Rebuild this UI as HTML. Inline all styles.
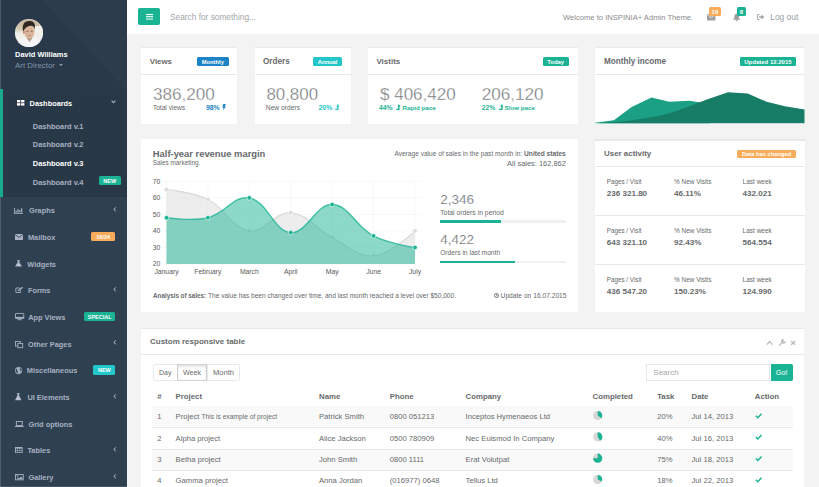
<!DOCTYPE html><html><head><meta charset="utf-8"><style>
html,body{margin:0;padding:0;}
body{width:819px;height:487px;position:relative;overflow:hidden;background:#f3f3f4;font-family:"Liberation Sans", sans-serif;}
.t{position:absolute;white-space:nowrap;line-height:1;}
.r{position:absolute;}
svg{position:absolute;overflow:visible;}
</style></head><body>
<div class="r" style="left:0.00px;top:0.00px;width:127.00px;height:487.00px;background:#2f4050;"></div>
<div class="r" style="left:0.00px;top:0.00px;width:127.00px;height:89.40px;background:#29394a;"></div>
<svg style="left:0.00px;top:0.00px" width="127" height="90" viewBox="0 0 127 90"><polygon points="43.3,0 127,0 127,89.4 124.6,89.4" fill="#2c3c4c"/></svg>
<svg style="left:15.00px;top:19.00px" width="28" height="28" viewBox="0 0 28 28"><defs><clipPath id="av"><circle cx="14" cy="14" r="14"/></clipPath><linearGradient id="bgg" x1="0" y1="0" x2="0" y2="1"><stop offset="0" stop-color="#bfae90"/><stop offset="0.38" stop-color="#d8ccb6"/><stop offset="0.5" stop-color="#eeede9"/><stop offset="1" stop-color="#f4f4f4"/></linearGradient></defs><g clip-path="url(#av)"><rect width="28" height="28" fill="url(#bgg)"/><rect x="20" y="7" width="8" height="9" fill="#f1efe9"/><path d="M0 28 C1 22 6 19 14 19 C22 19 27 22 28 28Z" fill="#f6f6f6"/><path d="M11.5 19 L14.5 23 L17.5 19Z" fill="#b39c8c"/><rect x="12" y="15.5" width="5" height="4" fill="#c89d82"/><ellipse cx="14.3" cy="13" rx="5" ry="6.6" fill="#dcb49b"/><ellipse cx="8.9" cy="13.2" rx="1.2" ry="1.9" fill="#cf9f86"/><path d="M11.4 12.2 h2 M15.6 12.2 h2" stroke="#6b5040" stroke-width="0.8"/><path d="M12.6 16.6 h3.4" stroke="#b07a66" stroke-width="0.6"/><path d="M8.2 12.5 C6.5 6 9.5 2 14 2 C18.5 2 20.8 4.5 19.8 10 C19.2 7.6 17.6 6.6 15.6 6.8 C12.6 7 10 8.6 8.2 12.5Z" fill="#2e2723"/></g><circle cx="14" cy="14" r="13.7" fill="none" stroke="#f0f0f0" stroke-width="0.6" opacity="0.7"/></svg>
<div class="t" style="left:15.10px;top:51px;font-size:7.46px;color:#fff;font-weight:bold;">David Williams</div>
<div class="t" style="left:15.10px;top:62px;font-size:7.9px;color:#8095a8;font-weight:normal;">Art Director</div>
<svg style="left:58.50px;top:64.20px" width="4" height="3" viewBox="0 0 4 3"><polygon points="0,0 4,0 2,2.2" fill="#8095a8"/></svg>
<div class="r" style="left:0.00px;top:89.40px;width:127.00px;height:107.20px;background:#293846;"></div>
<div class="r" style="left:0.00px;top:89.40px;width:2.50px;height:107.20px;background:#19aa8d;"></div>
<svg style="left:16.80px;top:100.20px" width="7.4" height="5.6" viewBox="0 0 7.4 5.6"><rect x="0" y="0" width="3.3" height="2.4" fill="#fff"/><rect x="4.1" y="0" width="3.3" height="2.4" fill="#fff"/><rect x="0" y="3.2" width="3.3" height="2.4" fill="#fff"/><rect x="4.1" y="3.2" width="3.3" height="2.4" fill="#fff"/></svg>
<div class="t" style="left:29.60px;top:100px;font-size:7.39px;color:#fff;font-weight:bold;">Dashboards</div>
<svg style="left:110.50px;top:100.30px" width="5" height="3.5" viewBox="0 0 5 3.5"><polyline points="0.6,0.6 2.5,2.6 4.4,0.6" fill="none" stroke="#a7b1c2" stroke-width="1.1"/></svg>
<div class="t" style="left:32.80px;top:123px;font-size:7.45px;color:#a7b1c2;font-weight:bold;">Dashboard v.1</div>
<div class="t" style="left:32.80px;top:141px;font-size:7.45px;color:#a7b1c2;font-weight:bold;">Dashboard v.2</div>
<div class="t" style="left:32.80px;top:160px;font-size:7.45px;color:#fff;font-weight:bold;">Dashboard v.3</div>
<div class="t" style="left:32.80px;top:179px;font-size:7.45px;color:#a7b1c2;font-weight:bold;">Dashboard v.4</div>
<div class="r" style="left:98.60px;top:176.20px;width:22.20px;height:8.80px;background:#1ab394;border-radius:1.5px;"></div>
<div class="t" style="left:109.70px;transform:translateX(-50%);top:179px;font-size:5.5px;color:#fff;font-weight:bold;">NEW</div>
<div class="t" style="left:28.90px;top:207px;font-size:7.4px;color:#a7b1c2;font-weight:bold;">Graphs</div>
<svg style="left:14.30px;top:207.60px" width="9.2" height="5.8" viewBox="0 0 9.2 5.8"><rect x="0" y="0" width="0.9" height="5.8" fill="#a7b1c2"/><rect x="0" y="4.9" width="9.2" height="0.9" fill="#a7b1c2"/><rect x="1.6" y="2.6" width="1.2" height="1.9" fill="#a7b1c2"/><rect x="3.4" y="1.0" width="1.2" height="3.5" fill="#a7b1c2"/><rect x="5.2" y="2.0" width="1.2" height="2.5" fill="#a7b1c2"/><rect x="7.0" y="0.2" width="1.2" height="4.3" fill="#a7b1c2"/></svg>
<svg style="left:112.60px;top:206.50px" width="3.5" height="5" viewBox="0 0 3.5 5"><polyline points="2.8,0.5 0.9,2.4 2.8,4.3" fill="none" stroke="#c3cad5" stroke-width="1.0"/></svg>
<div class="t" style="left:27.90px;top:234px;font-size:7.4px;color:#a7b1c2;font-weight:bold;">Mailbox</div>
<svg style="left:14.60px;top:234.20px" width="8" height="6.1" viewBox="0 0 8 6.1"><rect x="0" y="0" width="8" height="6.1" rx="0.5" fill="#a7b1c2"/><polyline points="0.2,0.6 4,3.4 7.8,0.6" fill="none" stroke="#2f4050" stroke-width="0.8"/></svg>
<div class="r" style="left:90.80px;top:232.00px;width:24.70px;height:9.20px;background:#f8ac59;border-radius:1.5px;"></div>
<div class="t" style="left:103.15px;transform:translateX(-50%);top:235px;font-size:5.5px;color:#fff;font-weight:bold;">16/24</div>
<div class="t" style="left:27.30px;top:261px;font-size:7.4px;color:#a7b1c2;font-weight:bold;">Widgets</div>
<svg style="left:15.00px;top:260.00px" width="7" height="6.6" viewBox="0 0 7 6.6"><path d="M2.2 0 H4.8 V0.7 H4.4 V2.3 L7 6.6 H0 L2.6 2.3 V0.7 H2.2Z" fill="#a7b1c2"/><path d="M2.5 4.2 L4.5 4.2 L5.5 5.8 L1.5 5.8Z" fill="#c9d0db"/></svg>
<div class="t" style="left:27.90px;top:287px;font-size:7.4px;color:#a7b1c2;font-weight:bold;">Forms</div>
<svg style="left:14.60px;top:287.20px" width="8.2" height="6" viewBox="0 0 8.2 6"><path d="M5 1 H0.9 V5.5 H5.6 V3.6" fill="none" stroke="#a7b1c2" stroke-width="0.9"/><path d="M2.8 4.2 L3.1 3 L7 -0.3 L8 0.8 L4 4.3Z" fill="#a7b1c2"/></svg>
<svg style="left:112.60px;top:286.90px" width="3.5" height="5" viewBox="0 0 3.5 5"><polyline points="2.8,0.5 0.9,2.4 2.8,4.3" fill="none" stroke="#c3cad5" stroke-width="1.0"/></svg>
<div class="t" style="left:28.20px;top:314px;font-size:7.4px;color:#a7b1c2;font-weight:bold;">App Views</div>
<svg style="left:14.60px;top:313.30px" width="9.2" height="7.2" viewBox="0 0 9.2 7.2"><rect x="0.45" y="0.45" width="8.3" height="4.9" rx="0.4" fill="none" stroke="#a7b1c2" stroke-width="0.9"/><rect x="0" y="3.9" width="9.2" height="1.5" fill="#a7b1c2"/><rect x="3.7" y="5.4" width="1.8" height="1" fill="#a7b1c2"/><rect x="2.4" y="6.3" width="4.4" height="0.9" fill="#a7b1c2"/></svg>
<div class="r" style="left:83.90px;top:311.90px;width:31.60px;height:9.20px;background:#1ab394;border-radius:1.5px;"></div>
<div class="t" style="left:99.70px;transform:translateX(-50%);top:315px;font-size:5.5px;color:#fff;font-weight:bold;">SPECIAL</div>
<div class="t" style="left:28.00px;top:341px;font-size:7.4px;color:#a7b1c2;font-weight:bold;">Other Pages</div>
<svg style="left:15.00px;top:340.50px" width="8.2" height="7.1" viewBox="0 0 8.2 7.1"><rect x="0.45" y="0.45" width="4.8" height="4.6" fill="none" stroke="#a7b1c2" stroke-width="0.9"/><rect x="2.9" y="2.5" width="4.8" height="4.2" fill="#2f4050" stroke="#a7b1c2" stroke-width="0.9"/></svg>
<svg style="left:112.60px;top:340.40px" width="3.5" height="5" viewBox="0 0 3.5 5"><polyline points="2.8,0.5 0.9,2.4 2.8,4.3" fill="none" stroke="#c3cad5" stroke-width="1.0"/></svg>
<div class="t" style="left:26.80px;top:367px;font-size:7.4px;color:#a7b1c2;font-weight:bold;">Miscellaneous</div>
<svg style="left:14.60px;top:366.90px" width="7.2" height="7.2" viewBox="0 0 7.2 7.2"><circle cx="3.6" cy="3.6" r="3.6" fill="#a7b1c2"/><path d="M1.2 1.8 C2 2.2 2.5 3 2.2 4 C3 4.5 2.8 5.6 3.4 6.4 C2 6.2 0.8 5 0.5 3.6Z M4.2 1 C5.2 1.4 5.4 2.4 4.6 2.8 C5.6 3.2 6.2 4.4 5.6 5.4 C6.6 4.6 7 3 6.2 1.8Z" fill="#2f4050"/></svg>
<div class="r" style="left:93.20px;top:365.40px;width:22.30px;height:9.20px;background:#23c6c8;border-radius:1.5px;"></div>
<div class="t" style="left:104.35px;transform:translateX(-50%);top:368px;font-size:5.5px;color:#fff;font-weight:bold;">NEW</div>
<div class="t" style="left:27.40px;top:394px;font-size:7.4px;color:#a7b1c2;font-weight:bold;">UI Elements</div>
<svg style="left:15.00px;top:393.20px" width="6.5" height="7.2" viewBox="0 0 6.5 7.2"><path d="M1.9 0 H4.6 V0.8 H4.2 V2.6 L6.5 7.2 H0 L2.3 2.6 V0.8 H1.9Z" fill="#a7b1c2"/><path d="M2.1 4.6 L4.4 4.6 L5.4 6.4 L1.1 6.4Z" fill="#c9d0db"/></svg>
<svg style="left:112.60px;top:393.50px" width="3.5" height="5" viewBox="0 0 3.5 5"><polyline points="2.8,0.5 0.9,2.4 2.8,4.3" fill="none" stroke="#c3cad5" stroke-width="1.0"/></svg>
<div class="t" style="left:28.40px;top:421px;font-size:7.4px;color:#a7b1c2;font-weight:bold;">Grid options</div>
<svg style="left:14.70px;top:421.10px" width="8.7" height="6" viewBox="0 0 8.7 6"><rect x="1.35" y="0.45" width="6" height="4" fill="none" stroke="#a7b1c2" stroke-width="0.9"/><rect x="0" y="5" width="8.7" height="1" fill="#a7b1c2"/></svg>
<div class="t" style="left:27.40px;top:447px;font-size:7.4px;color:#a7b1c2;font-weight:bold;">Tables</div>
<svg style="left:14.70px;top:447.20px" width="7.6" height="6" viewBox="0 0 7.6 6"><rect x="0" y="0" width="7.6" height="6" fill="#a7b1c2"/><rect x="0.9" y="1.6" width="1.6" height="1.6" fill="#2f4050"/><rect x="3.0" y="1.6" width="1.6" height="1.6" fill="#2f4050"/><rect x="5.1" y="1.6" width="1.6" height="1.6" fill="#2f4050"/><rect x="0.9" y="3.7" width="1.6" height="1.6" fill="#2f4050"/><rect x="3.0" y="3.7" width="1.6" height="1.6" fill="#2f4050"/><rect x="5.1" y="3.7" width="1.6" height="1.6" fill="#2f4050"/></svg>
<svg style="left:112.60px;top:446.80px" width="3.5" height="5" viewBox="0 0 3.5 5"><polyline points="2.8,0.5 0.9,2.4 2.8,4.3" fill="none" stroke="#c3cad5" stroke-width="1.0"/></svg>
<div class="t" style="left:28.40px;top:474px;font-size:7.4px;color:#a7b1c2;font-weight:bold;">Gallery</div>
<svg style="left:14.70px;top:474.10px" width="8.7" height="6.3" viewBox="0 0 8.7 6.3"><rect x="0.45" y="0.45" width="7.8" height="5.4" fill="none" stroke="#a7b1c2" stroke-width="0.9"/><circle cx="2.4" cy="2.1" r="0.8" fill="#a7b1c2"/><path d="M1.2 5.2 L3.4 3.4 L4.4 4.2 L6 2.4 L7.5 4 L7.5 5.2Z" fill="#a7b1c2"/></svg>
<svg style="left:112.60px;top:473.90px" width="3.5" height="5" viewBox="0 0 3.5 5"><polyline points="2.8,0.5 0.9,2.4 2.8,4.3" fill="none" stroke="#c3cad5" stroke-width="1.0"/></svg>
<div class="r" style="left:0.00px;top:0.00px;width:1.00px;height:487.00px;background:rgba(255,255,255,0.16);"></div>
<div class="r" style="left:0.00px;top:486.00px;width:127.00px;height:1.00px;background:rgba(255,255,255,0.12);"></div>
<div class="r" style="left:0.00px;top:89.40px;width:1.00px;height:107.20px;background:#19aa8d;"></div>
<div class="r" style="left:127.00px;top:0.00px;width:692.00px;height:34.00px;background:#fff;"></div>
<div class="r" style="left:138.20px;top:8.20px;width:21.70px;height:16.80px;background:#1ab394;border-radius:1.8px;"></div>
<svg style="left:145.70px;top:13.80px" width="7.1" height="6" viewBox="0 0 7.1 6"><rect y="0" width="7.1" height="1.1" fill="#fff"/><rect y="2.15" width="7.1" height="1.1" fill="#fff"/><rect y="4.5" width="7.1" height="1.1" fill="#e8f7f3"/></svg>
<div class="t" style="left:170.00px;top:13px;font-size:8.32px;color:#a3a5a7;font-weight:normal;">Search for something...</div>
<div class="t" style="left:563.00px;top:14px;font-size:7.62px;color:#8a8c8e;font-weight:normal;">Welcome to INSPINIA+ Admin Theme.</div>
<svg style="left:706.80px;top:13.90px" width="8.4" height="6.6" viewBox="0 0 8.4 6.6"><rect x="0" y="0" width="8.4" height="6.6" rx="0.6" fill="#9ea1a3"/><polyline points="0.4,0.6 4.2,3.6 8,0.6" fill="none" stroke="#fff" stroke-width="0.7"/></svg>
<div class="r" style="left:709.00px;top:6.90px;width:11.80px;height:9.00px;background:#f8ac59;border-radius:1.5px;"></div>
<div class="t" style="left:714.90px;transform:translateX(-50%);top:10px;font-size:5.9px;color:#fff;font-weight:bold;">16</div>
<svg style="left:732.50px;top:12.50px" width="7.4" height="8" viewBox="0 0 7.4 8"><path d="M3.7 0.4 C1.6 0.8 1.4 2.6 1.3 4.3 C1.2 5.5 0.5 6.2 0 6.8 L7.4 6.8 C6.9 6.2 6.2 5.5 6.1 4.3 C6 2.6 5.8 0.8 3.7 0.4Z" fill="#9ea1a3"/><circle cx="3.7" cy="7.3" r="0.9" fill="#9ea1a3"/></svg>
<div class="r" style="left:736.90px;top:6.90px;width:9.10px;height:9.00px;background:#1ab394;border-radius:1.5px;"></div>
<div class="t" style="left:741.45px;transform:translateX(-50%);top:10px;font-size:5.9px;color:#fff;font-weight:bold;">8</div>
<svg style="left:756.70px;top:14.00px" width="7.5" height="6" viewBox="0 0 7.5 6"><path d="M2.5 0.5 L0.5 0.5 L0.5 5.5 L2.5 5.5" fill="none" stroke="#9ea1a3" stroke-width="0.9"/><polygon points="2.2,2.2 4.5,2.2 4.5,0.6 7.3,3 4.5,5.4 4.5,3.8 2.2,3.8" fill="#9ea1a3"/></svg>
<div class="t" style="left:770.30px;top:13px;font-size:8.39px;color:#999c9e;font-weight:normal;">Log out</div>
<div class="r" style="left:140.90px;top:46.70px;width:96.40px;height:77.30px;background:#fff;"></div>
<div class="r" style="left:140.90px;top:46.70px;width:96.40px;height:1.50px;background:#e7eaec;"></div>
<div class="r" style="left:140.90px;top:73.60px;width:96.40px;height:0.60px;background:#e7eaec;"></div>
<div class="r" style="left:254.50px;top:46.70px;width:96.30px;height:77.30px;background:#fff;"></div>
<div class="r" style="left:254.50px;top:46.70px;width:96.30px;height:1.50px;background:#e7eaec;"></div>
<div class="r" style="left:254.50px;top:73.60px;width:96.30px;height:0.60px;background:#e7eaec;"></div>
<div class="r" style="left:368.10px;top:46.70px;width:209.70px;height:77.30px;background:#fff;"></div>
<div class="r" style="left:368.10px;top:46.70px;width:209.70px;height:1.50px;background:#e7eaec;"></div>
<div class="r" style="left:368.10px;top:73.60px;width:209.70px;height:0.60px;background:#e7eaec;"></div>
<div class="r" style="left:594.60px;top:46.70px;width:209.90px;height:77.30px;background:#fff;"></div>
<div class="r" style="left:594.60px;top:46.70px;width:209.90px;height:1.50px;background:#e7eaec;"></div>
<div class="r" style="left:594.60px;top:73.60px;width:209.90px;height:0.60px;background:#e7eaec;"></div>
<div class="t" style="left:149.80px;top:58px;font-size:7.88px;color:#676a6c;font-weight:bold;">Views</div>
<div class="r" style="left:196.80px;top:56.90px;width:32.00px;height:9.00px;background:#1c84c6;border-radius:1.5px;"></div>
<div class="t" style="left:212.80px;transform:translateX(-50%);top:60px;font-size:5.8px;color:#fff;font-weight:bold;">Monthly</div>
<div class="t" style="left:152.90px;top:86px;font-size:17.1px;color:#676a6c;font-weight:normal;-webkit-text-stroke:0.4px #fff;">386,200</div>
<div class="t" style="left:152.90px;top:105px;font-size:6.6px;color:#676a6c;font-weight:normal;">Total views</div>
<div class="t" style="left:205.90px;top:105px;font-size:6.94px;color:#1c84c6;font-weight:bold;">98%</div>
<svg style="left:222.00px;top:104.40px" width="4" height="6.4" viewBox="0 0 4 6.4"><polygon points="1.3,0 3.9,0 2.6,2.4 4,2.4 0.9,6.4 1.6,3.5 0.2,3.5" fill="#1c84c6"/></svg>
<div class="t" style="left:263.00px;top:58px;font-size:8.2px;color:#676a6c;font-weight:bold;">Orders</div>
<div class="r" style="left:313.10px;top:56.90px;width:29.00px;height:9.00px;background:#23c6c8;border-radius:1.5px;"></div>
<div class="t" style="left:327.60px;transform:translateX(-50%);top:60px;font-size:5.8px;color:#fff;font-weight:bold;">Annual</div>
<div class="t" style="left:266.40px;top:87px;font-size:16.9px;color:#676a6c;font-weight:normal;-webkit-text-stroke:0.4px #fff;">80,800</div>
<div class="t" style="left:265.80px;top:105px;font-size:6.69px;color:#676a6c;font-weight:normal;">New orders</div>
<div class="t" style="left:318.50px;top:105px;font-size:6.94px;color:#23c6c8;font-weight:bold;">20%</div>
<svg style="left:335.00px;top:104.00px" width="4.4" height="6" viewBox="0 0 4.4 6"><path d="M0.2 6 H3.6 V2.4 H4.4 L2.9 0 L1.4 2.4 H2.2 V4.7 H0.2Z" fill="#23c6c8"/></svg>
<div class="t" style="left:376.40px;top:58px;font-size:8.0px;color:#676a6c;font-weight:bold;">Vistits</div>
<div class="r" style="left:542.70px;top:56.90px;width:26.00px;height:9.00px;background:#1ab394;border-radius:1.5px;"></div>
<div class="t" style="left:555.70px;transform:translateX(-50%);top:60px;font-size:5.8px;color:#fff;font-weight:bold;">Today</div>
<div class="t" style="left:380.00px;top:86px;font-size:17.0px;color:#676a6c;font-weight:normal;-webkit-text-stroke:0.4px #fff;">$ 406,420</div>
<div class="t" style="left:481.70px;top:86px;font-size:17.1px;color:#676a6c;font-weight:normal;-webkit-text-stroke:0.4px #fff;">206,120</div>
<div class="t" style="left:379.10px;top:105px;font-size:6.75px;color:#1ab394;font-weight:bold;">44%</div>
<svg style="left:396.20px;top:104.00px" width="4.4" height="6" viewBox="0 0 4.4 6"><path d="M0.2 6 H3.6 V2.4 H4.4 L2.9 0 L1.4 2.4 H2.2 V4.7 H0.2Z" fill="#1ab394"/></svg>
<div class="t" style="left:402.60px;top:105px;font-size:6.2px;color:#1ab394;font-weight:bold;">Rapid pace</div>
<div class="t" style="left:481.80px;top:105px;font-size:6.75px;color:#1ab394;font-weight:bold;">22%</div>
<svg style="left:498.90px;top:104.00px" width="4.4" height="6" viewBox="0 0 4.4 6"><path d="M0.2 6 H3.6 V2.4 H4.4 L2.9 0 L1.4 2.4 H2.2 V4.7 H0.2Z" fill="#1ab394"/></svg>
<div class="t" style="left:504.60px;top:105px;font-size:6.2px;color:#1ab394;font-weight:bold;">Slow pace</div>
<div class="t" style="left:604.10px;top:58px;font-size:8.13px;color:#676a6c;font-weight:bold;">Monthly income</div>
<div class="r" style="left:740.00px;top:57.10px;width:55.90px;height:8.60px;background:#1ab394;border-radius:1.5px;"></div>
<div class="t" style="left:767.95px;transform:translateX(-50%);top:59px;font-size:6.0px;color:#fff;font-weight:bold;">Updated 12.2015</div>
<svg style="left:0;top:0" width="819" height="487"><polygon points="595,122.7 613.9,120.3 631.6,106.9 651.5,97.5 669.2,101.8 689.4,100.8 700.6,102.5 710,104 710,123.2 595,123.2" fill="#1ba085"/><path d="M595 123.2 C620 123 640 119 657.2 116.3 C672 113 685 108 695 103.9 L708.3 99 L728 92.2 L747.7 93.6 L766.6 101.8 L784.9 106.3 L804.5 109.5 L804.5 123.2 Z" fill="#177d67"/></svg>
<div class="r" style="left:140.90px;top:139.20px;width:437.10px;height:173.10px;background:#fff;"></div>
<div class="t" style="left:152.80px;top:149px;font-size:9.4px;color:#676a6c;font-weight:bold;">Half-year revenue margin</div>
<div class="t" style="left:152.80px;top:160px;font-size:6.39px;color:#676a6c;font-weight:normal;">Sales marketing.</div>
<div class="t" style="right:253.20px;top:151px;font-size:6.6px;color:#676a6c;font-weight:normal;">Average value of sales in the past month in: <b style="font-size:6.66px">United states</b></div>
<div class="t" style="right:253.20px;top:160px;font-size:7.44px;color:#676a6c;font-weight:normal;">All sales: 162,862</div>
<svg style="left:0;top:0" width="819" height="487"><line x1="162" y1="264.10" x2="422" y2="264.10" stroke="rgba(0,0,0,.06)" stroke-width="0.6"/><text x="160.4" y="266.40" font-size="6.8" fill="#5a5a5a" text-anchor="end" font-family="Liberation Sans">20</text><line x1="162" y1="247.54" x2="422" y2="247.54" stroke="rgba(0,0,0,.06)" stroke-width="0.6"/><text x="160.4" y="249.84" font-size="6.8" fill="#5a5a5a" text-anchor="end" font-family="Liberation Sans">30</text><line x1="162" y1="230.98" x2="422" y2="230.98" stroke="rgba(0,0,0,.06)" stroke-width="0.6"/><text x="160.4" y="233.28" font-size="6.8" fill="#5a5a5a" text-anchor="end" font-family="Liberation Sans">40</text><line x1="162" y1="214.42" x2="422" y2="214.42" stroke="rgba(0,0,0,.06)" stroke-width="0.6"/><text x="160.4" y="216.72" font-size="6.8" fill="#5a5a5a" text-anchor="end" font-family="Liberation Sans">50</text><line x1="162" y1="197.86" x2="422" y2="197.86" stroke="rgba(0,0,0,.06)" stroke-width="0.6"/><text x="160.4" y="200.16" font-size="6.8" fill="#5a5a5a" text-anchor="end" font-family="Liberation Sans">60</text><line x1="162" y1="181.30" x2="422" y2="181.30" stroke="rgba(0,0,0,.06)" stroke-width="0.6"/><text x="160.4" y="183.60" font-size="6.8" fill="#5a5a5a" text-anchor="end" font-family="Liberation Sans">70</text><line x1="166.50" y1="181.3" x2="166.50" y2="266.8" stroke="rgba(0,0,0,.06)" stroke-width="0.6"/><text x="166.50" y="274.1" font-size="6.8" fill="#5a5a5a" text-anchor="middle" font-family="Liberation Sans">January</text><line x1="207.92" y1="181.3" x2="207.92" y2="266.8" stroke="rgba(0,0,0,.06)" stroke-width="0.6"/><text x="207.92" y="274.1" font-size="6.8" fill="#5a5a5a" text-anchor="middle" font-family="Liberation Sans">February</text><line x1="249.33" y1="181.3" x2="249.33" y2="266.8" stroke="rgba(0,0,0,.06)" stroke-width="0.6"/><text x="249.33" y="274.1" font-size="6.8" fill="#5a5a5a" text-anchor="middle" font-family="Liberation Sans">March</text><line x1="290.75" y1="181.3" x2="290.75" y2="266.8" stroke="rgba(0,0,0,.06)" stroke-width="0.6"/><text x="290.75" y="274.1" font-size="6.8" fill="#5a5a5a" text-anchor="middle" font-family="Liberation Sans">April</text><line x1="332.17" y1="181.3" x2="332.17" y2="266.8" stroke="rgba(0,0,0,.06)" stroke-width="0.6"/><text x="332.17" y="274.1" font-size="6.8" fill="#5a5a5a" text-anchor="middle" font-family="Liberation Sans">May</text><line x1="373.58" y1="181.3" x2="373.58" y2="266.8" stroke="rgba(0,0,0,.06)" stroke-width="0.6"/><text x="373.58" y="274.1" font-size="6.8" fill="#5a5a5a" text-anchor="middle" font-family="Liberation Sans">June</text><line x1="415.00" y1="181.3" x2="415.00" y2="266.8" stroke="rgba(0,0,0,.06)" stroke-width="0.6"/><text x="415.00" y="274.1" font-size="6.8" fill="#5a5a5a" text-anchor="middle" font-family="Liberation Sans">July</text><path d="M166.50 189.58 C166.50 189.58 193.00 192.06 207.92 199.52 C226.13 208.62 231.61 228.15 249.33 230.98 C264.75 233.45 274.72 211.48 290.75 212.76 C307.86 214.13 315.06 228.71 332.17 237.60 C348.19 245.93 357.56 257.10 373.58 255.82 C390.69 254.45 415.00 230.98 415.00 230.98 L415.00 264.10 L166.50 264.10 Z" fill="rgba(220,220,220,0.5)"/><path d="M166.50 189.58 C166.50 189.58 193.00 192.06 207.92 199.52 C226.13 208.62 231.61 228.15 249.33 230.98 C264.75 233.45 274.72 211.48 290.75 212.76 C307.86 214.13 315.06 228.71 332.17 237.60 C348.19 245.93 357.56 257.10 373.58 255.82 C390.69 254.45 415.00 230.98 415.00 230.98" fill="none" stroke="rgba(220,220,220,1)" stroke-width="1.3"/><circle cx="166.50" cy="189.58" r="2.3" fill="rgb(220,220,220)" stroke="#fff" stroke-width="0.6"/><circle cx="207.92" cy="199.52" r="2.3" fill="rgb(220,220,220)" stroke="#fff" stroke-width="0.6"/><circle cx="249.33" cy="230.98" r="2.3" fill="rgb(220,220,220)" stroke="#fff" stroke-width="0.6"/><circle cx="290.75" cy="212.76" r="2.3" fill="rgb(220,220,220)" stroke="#fff" stroke-width="0.6"/><circle cx="332.17" cy="237.60" r="2.3" fill="rgb(220,220,220)" stroke="#fff" stroke-width="0.6"/><circle cx="373.58" cy="255.82" r="2.3" fill="rgb(220,220,220)" stroke="#fff" stroke-width="0.6"/><circle cx="415.00" cy="230.98" r="2.3" fill="rgb(220,220,220)" stroke="#fff" stroke-width="0.6"/><path d="M166.50 217.73 C166.50 217.73 192.21 221.50 207.92 217.73 C225.34 213.55 234.12 195.12 249.33 197.86 C267.25 201.08 273.55 231.26 290.75 232.64 C306.68 233.91 315.91 203.83 332.17 204.48 C349.05 205.16 355.45 226.52 373.58 235.95 C388.58 243.74 415.00 247.54 415.00 247.54 L415.00 264.10 L166.50 264.10 Z" fill="rgba(26,179,148,0.5)"/><path d="M166.50 217.73 C166.50 217.73 192.21 221.50 207.92 217.73 C225.34 213.55 234.12 195.12 249.33 197.86 C267.25 201.08 273.55 231.26 290.75 232.64 C306.68 233.91 315.91 203.83 332.17 204.48 C349.05 205.16 355.45 226.52 373.58 235.95 C388.58 243.74 415.00 247.54 415.00 247.54" fill="none" stroke="rgba(26,179,148,0.8)" stroke-width="1.4"/><circle cx="166.50" cy="217.73" r="2.3" fill="rgb(26,179,148)" stroke="#fff" stroke-width="0.6"/><circle cx="207.92" cy="217.73" r="2.3" fill="rgb(26,179,148)" stroke="#fff" stroke-width="0.6"/><circle cx="249.33" cy="197.86" r="2.3" fill="rgb(26,179,148)" stroke="#fff" stroke-width="0.6"/><circle cx="290.75" cy="232.64" r="2.3" fill="rgb(26,179,148)" stroke="#fff" stroke-width="0.6"/><circle cx="332.17" cy="204.48" r="2.3" fill="rgb(26,179,148)" stroke="#fff" stroke-width="0.6"/><circle cx="373.58" cy="235.95" r="2.3" fill="rgb(26,179,148)" stroke="#fff" stroke-width="0.6"/><circle cx="415.00" cy="247.54" r="2.3" fill="rgb(26,179,148)" stroke="#fff" stroke-width="0.6"/></svg>
<div class="t" style="left:440.20px;top:193px;font-size:13.5px;color:#676a6c;font-weight:normal;-webkit-text-stroke:0.22px #fff;">2,346</div>
<div class="t" style="left:440.20px;top:210px;font-size:6.82px;color:#676a6c;font-weight:normal;">Total orders in period</div>
<div class="r" style="left:440.20px;top:220.40px;width:125.60px;height:2.40px;background:#f1f1f1;"></div>
<div class="r" style="left:440.20px;top:220.40px;width:60.60px;height:2.40px;background:#1ab394;"></div>
<div class="t" style="left:440.20px;top:233px;font-size:13.5px;color:#676a6c;font-weight:normal;-webkit-text-stroke:0.22px #fff;">4,422</div>
<div class="t" style="left:440.20px;top:250px;font-size:6.66px;color:#676a6c;font-weight:normal;">Orders in last month</div>
<div class="r" style="left:440.20px;top:260.50px;width:125.60px;height:2.40px;background:#f1f1f1;"></div>
<div class="r" style="left:440.20px;top:260.50px;width:75.30px;height:2.40px;background:#1ab394;"></div>
<div class="t" style="left:153.10px;top:293px;font-size:6.27px;color:#676a6c;font-weight:bold;">Analysis of sales:</div>
<div class="t" style="left:208.10px;top:293px;font-size:6.56px;color:#676a6c;font-weight:normal;">The value has been changed over time, and last month reached a level over $50,000.</div>
<svg style="left:494.10px;top:292.60px" width="5" height="5" viewBox="0 0 5 5"><circle cx="2.5" cy="2.5" r="2.05" fill="none" stroke="#676a6c" stroke-width="0.9"/><polyline points="2.5,1.2 2.5,2.7 3.6,2.7" fill="none" stroke="#676a6c" stroke-width="0.7"/></svg>
<div class="t" style="right:252.50px;top:293px;font-size:6.67px;color:#676a6c;font-weight:normal;">Update on 16.07.2015</div>
<div class="r" style="left:594.80px;top:139.00px;width:210.10px;height:172.50px;background:#fff;"></div>
<div class="r" style="left:594.80px;top:139.00px;width:210.10px;height:1.50px;background:#e7eaec;"></div>
<div class="r" style="left:594.80px;top:166.40px;width:210.10px;height:0.60px;background:#e7eaec;"></div>
<div class="t" style="left:604.00px;top:150px;font-size:7.94px;color:#676a6c;font-weight:bold;">User activity</div>
<div class="r" style="left:737.20px;top:149.80px;width:58.80px;height:8.00px;background:#f8ac59;border-radius:1.5px;"></div>
<div class="t" style="left:766.60px;transform:translateX(-50%);top:152px;font-size:5.75px;color:#fff;font-weight:bold;">Data has changed</div>
<div class="t" style="left:606.70px;top:179px;font-size:6.3px;color:#676a6c;font-weight:normal;">Pages / Visit</div>
<div class="t" style="left:606.70px;top:190px;font-size:8.09px;color:#676a6c;font-weight:bold;">236 321.80</div>
<div class="t" style="left:674.00px;top:179px;font-size:6.43px;color:#676a6c;font-weight:normal;">% New Visits</div>
<div class="t" style="left:674.00px;top:190px;font-size:8.09px;color:#676a6c;font-weight:bold;">46.11%</div>
<div class="t" style="left:742.60px;top:179px;font-size:6.49px;color:#676a6c;font-weight:normal;">Last week</div>
<div class="t" style="left:742.60px;top:190px;font-size:8.09px;color:#676a6c;font-weight:bold;">432.021</div>
<div class="t" style="left:606.70px;top:228px;font-size:6.3px;color:#676a6c;font-weight:normal;">Pages / Visit</div>
<div class="t" style="left:606.70px;top:239px;font-size:8.09px;color:#676a6c;font-weight:bold;">643 321.10</div>
<div class="t" style="left:674.00px;top:228px;font-size:6.43px;color:#676a6c;font-weight:normal;">% New Visits</div>
<div class="t" style="left:674.00px;top:239px;font-size:8.09px;color:#676a6c;font-weight:bold;">92.43%</div>
<div class="t" style="left:742.60px;top:228px;font-size:6.49px;color:#676a6c;font-weight:normal;">Last week</div>
<div class="t" style="left:742.60px;top:239px;font-size:8.09px;color:#676a6c;font-weight:bold;">564.554</div>
<div class="r" style="left:594.80px;top:215.20px;width:210.10px;height:0.60px;background:#e7eaec;"></div>
<div class="t" style="left:606.70px;top:277px;font-size:6.3px;color:#676a6c;font-weight:normal;">Pages / Visit</div>
<div class="t" style="left:606.70px;top:288px;font-size:8.09px;color:#676a6c;font-weight:bold;">436 547.20</div>
<div class="t" style="left:674.00px;top:277px;font-size:6.43px;color:#676a6c;font-weight:normal;">% New Visits</div>
<div class="t" style="left:674.00px;top:288px;font-size:8.09px;color:#676a6c;font-weight:bold;">150.23%</div>
<div class="t" style="left:742.60px;top:277px;font-size:6.49px;color:#676a6c;font-weight:normal;">Last week</div>
<div class="t" style="left:742.60px;top:288px;font-size:8.09px;color:#676a6c;font-weight:bold;">124.990</div>
<div class="r" style="left:594.80px;top:264.40px;width:210.10px;height:0.60px;background:#e7eaec;"></div>
<div class="r" style="left:140.90px;top:327.70px;width:662.80px;height:164.30px;background:#fff;"></div>
<div class="r" style="left:140.90px;top:327.70px;width:662.80px;height:1.50px;background:#e7eaec;"></div>
<div class="r" style="left:140.90px;top:354.10px;width:662.80px;height:0.60px;background:#e7eaec;"></div>
<div class="t" style="left:150.00px;top:338px;font-size:8.01px;color:#676a6c;font-weight:bold;">Custom responsive table</div>
<svg style="left:0;top:0" width="819" height="487"><polyline points="766.8,344.6 769.7,341.5 772.6,344.6" fill="none" stroke="#bdbdbd" stroke-width="1.3"/><path d="M779.3 345.6 L782.5 342.3" stroke="#bdbdbd" stroke-width="1.3" fill="none"/><path d="M781.2 341.9 A2 2 0 0 1 784.2 339.4 L783.2 340.8 L784 341.8 L785.6 340.9 A2 2 0 0 1 782.8 343.4 Z" fill="#bdbdbd"/><path d="M791.1 340.9 L795.1 344.7 M795.1 340.9 L791.1 344.7" stroke="#bdbdbd" stroke-width="1.4"/></svg>
<div class="r" style="left:152.6px;top:363.6px;width:87.7px;height:17.2px;border:0.6px solid #e7eaec;box-sizing:border-box;border-radius:1.7px;background:#fff"></div>
<div class="r" style="left:177.3px;top:363.6px;width:29.5px;height:17.2px;border:0.6px solid #d2d2d2;box-sizing:border-box;background:#fff;box-shadow:inset 0 1.7px 2.8px rgba(0,0,0,.12)"></div>
<div class="r" style="left:206.80px;top:363.60px;width:0.60px;height:17.20px;background:#e7eaec;"></div>
<div class="t" style="left:159.00px;top:369px;font-size:7.03px;color:#676a6c;font-weight:normal;">Day</div>
<div class="t" style="left:183.00px;top:370px;font-size:7.09px;color:#676a6c;font-weight:normal;">Week</div>
<div class="t" style="left:213.00px;top:369px;font-size:7.59px;color:#676a6c;font-weight:normal;">Month</div>
<div class="r" style="left:645.9px;top:363.5px;width:124.6px;height:17px;border:0.6px solid #e5e6e7;box-sizing:border-box;background:#fff"></div>
<div class="t" style="left:653.30px;top:369px;font-size:8.02px;color:#a8a8a8;font-weight:normal;">Search</div>
<div class="r" style="left:770.50px;top:363.50px;width:22.20px;height:17.00px;background:#1ab394;border-radius:0 1.7px 1.7px 0;"></div>
<div class="t" style="left:775.70px;top:369px;font-size:7.32px;color:#fff;font-weight:normal;">Go!</div>
<div class="r" style="left:152.30px;top:406.10px;width:640.70px;height:0.70px;background:#e7eaec;"></div>
<div class="t" style="left:157.30px;top:393px;font-size:7.8px;color:#676a6c;font-weight:bold;">#</div>
<div class="t" style="left:175.60px;top:393px;font-size:7.8px;color:#676a6c;font-weight:bold;">Project</div>
<div class="t" style="left:319.00px;top:393px;font-size:7.8px;color:#676a6c;font-weight:bold;">Name</div>
<div class="t" style="left:389.70px;top:393px;font-size:7.8px;color:#676a6c;font-weight:bold;">Phone</div>
<div class="t" style="left:465.60px;top:393px;font-size:7.8px;color:#676a6c;font-weight:bold;">Company</div>
<div class="t" style="left:592.60px;top:393px;font-size:7.8px;color:#676a6c;font-weight:bold;">Completed</div>
<div class="t" style="left:657.20px;top:393px;font-size:7.8px;color:#676a6c;font-weight:bold;">Task</div>
<div class="t" style="left:691.50px;top:393px;font-size:7.8px;color:#676a6c;font-weight:bold;">Date</div>
<div class="t" style="left:754.80px;top:393px;font-size:7.8px;color:#676a6c;font-weight:bold;">Action</div>
<div class="r" style="left:152.30px;top:406.40px;width:640.70px;height:21.30px;background:#f9f9f9;"></div>
<div class="t" style="left:157.30px;top:413px;font-size:7.65px;color:#676a6c;font-weight:normal;">1</div>
<div class="t" style="left:175.60px;top:413px;font-size:7.65px;color:#676a6c;font-weight:normal;">Project <span style="font-size:6.68px">This is example of project</span></div>
<div class="t" style="left:319.00px;top:413px;font-size:7.65px;color:#676a6c;font-weight:normal;">Patrick Smith</div>
<div class="t" style="left:389.70px;top:413px;font-size:7.65px;color:#676a6c;font-weight:normal;">0800 051213</div>
<div class="t" style="left:465.60px;top:413px;font-size:7.65px;color:#676a6c;font-weight:normal;">Inceptos Hymenaeos Ltd</div>
<div class="t" style="left:657.20px;top:413px;font-size:7.65px;color:#676a6c;font-weight:normal;">20%</div>
<div class="t" style="left:691.50px;top:413px;font-size:7.65px;color:#676a6c;font-weight:normal;">Jul 14, 2013</div>
<svg style="left:0;top:0" width="819" height="487"><circle cx="597.7" cy="415.50" r="4.6" fill="#d7d7d7"/><path d="M597.7 415.50 L597.7 410.90 A4.6 4.6 0 0 1 601.47 418.14 Z" fill="#1ab394"/><polyline points="755.8,415.70 757.8,417.70 761.6,413.70" fill="none" stroke="#1ab394" stroke-width="1.4"/></svg>
<div class="r" style="left:152.30px;top:427.40px;width:640.70px;height:0.70px;background:#e7eaec;"></div>
<div class="t" style="left:157.30px;top:435px;font-size:7.65px;color:#676a6c;font-weight:normal;">2</div>
<div class="t" style="left:175.60px;top:435px;font-size:7.65px;color:#676a6c;font-weight:normal;">Alpha project</div>
<div class="t" style="left:319.00px;top:435px;font-size:7.65px;color:#676a6c;font-weight:normal;">Alice Jackson</div>
<div class="t" style="left:389.70px;top:435px;font-size:7.65px;color:#676a6c;font-weight:normal;">0500 780909</div>
<div class="t" style="left:465.60px;top:435px;font-size:7.65px;color:#676a6c;font-weight:normal;">Nec Euismod In Company</div>
<div class="t" style="left:657.20px;top:435px;font-size:7.65px;color:#676a6c;font-weight:normal;">40%</div>
<div class="t" style="left:691.50px;top:435px;font-size:7.65px;color:#676a6c;font-weight:normal;">Jul 16, 2013</div>
<svg style="left:0;top:0" width="819" height="487"><circle cx="597.7" cy="436.85" r="4.6" fill="#d7d7d7"/><path d="M597.7 436.85 L597.7 432.25 A4.6 4.6 0 0 1 600.00 440.83 Z" fill="#1ab394"/><polyline points="755.8,437.05 757.8,439.05 761.6,435.05" fill="none" stroke="#1ab394" stroke-width="1.4"/></svg>
<div class="r" style="left:152.30px;top:449.00px;width:640.70px;height:21.30px;background:#f9f9f9;"></div>
<div class="r" style="left:152.30px;top:448.70px;width:640.70px;height:0.70px;background:#e7eaec;"></div>
<div class="t" style="left:157.30px;top:456px;font-size:7.65px;color:#676a6c;font-weight:normal;">3</div>
<div class="t" style="left:175.60px;top:456px;font-size:7.65px;color:#676a6c;font-weight:normal;">Betha project</div>
<div class="t" style="left:319.00px;top:456px;font-size:7.65px;color:#676a6c;font-weight:normal;">John Smith</div>
<div class="t" style="left:389.70px;top:456px;font-size:7.65px;color:#676a6c;font-weight:normal;">0800 1111</div>
<div class="t" style="left:465.60px;top:456px;font-size:7.65px;color:#676a6c;font-weight:normal;">Erat Volutpat</div>
<div class="t" style="left:657.20px;top:456px;font-size:7.65px;color:#676a6c;font-weight:normal;">75%</div>
<div class="t" style="left:691.50px;top:456px;font-size:7.65px;color:#676a6c;font-weight:normal;">Jul 18, 2013</div>
<svg style="left:0;top:0" width="819" height="487"><circle cx="597.7" cy="458.20" r="4.6" fill="#d7d7d7"/><path d="M597.7 458.20 L597.7 453.60 A4.6 4.6 0 1 1 593.10 458.20 Z" fill="#1ab394"/><polyline points="755.8,458.40 757.8,460.40 761.6,456.40" fill="none" stroke="#1ab394" stroke-width="1.4"/></svg>
<div class="r" style="left:152.30px;top:470.00px;width:640.70px;height:0.70px;background:#e7eaec;"></div>
<div class="t" style="left:157.30px;top:477px;font-size:7.65px;color:#676a6c;font-weight:normal;">4</div>
<div class="t" style="left:175.60px;top:477px;font-size:7.65px;color:#676a6c;font-weight:normal;">Gamma project</div>
<div class="t" style="left:319.00px;top:477px;font-size:7.65px;color:#676a6c;font-weight:normal;">Anna Jordan</div>
<div class="t" style="left:389.70px;top:477px;font-size:7.65px;color:#676a6c;font-weight:normal;">(016977) 0648</div>
<div class="t" style="left:465.60px;top:477px;font-size:7.65px;color:#676a6c;font-weight:normal;">Tellus Ltd</div>
<div class="t" style="left:657.20px;top:477px;font-size:7.65px;color:#676a6c;font-weight:normal;">18%</div>
<div class="t" style="left:691.50px;top:477px;font-size:7.65px;color:#676a6c;font-weight:normal;">Jul 22, 2013</div>
<svg style="left:0;top:0" width="819" height="487"><circle cx="597.7" cy="479.55" r="4.6" fill="#d7d7d7"/><path d="M597.7 479.55 L597.7 474.95 A4.6 4.6 0 0 1 601.87 481.49 Z" fill="#1ab394"/><polyline points="755.8,479.75 757.8,481.75 761.6,477.75" fill="none" stroke="#1ab394" stroke-width="1.4"/></svg>
</body></html>
